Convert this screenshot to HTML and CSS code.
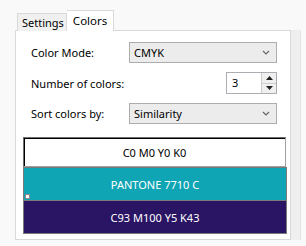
FILE: index.html
```html
<!DOCTYPE html>
<html>

<head>
    <title>Colors</title>
    <link rel="stylesheet" href="styles.css">
</head>

<body>
    <div class="window">
        <div class="tabs">
            <div class="tab">Settings</div>
            <div class="tab active">Colors</div>
        </div>
        <div class="body-row">
            <div class="panel">
                <div class="form">
                    <span class="label">Color Mode:</span>
                    <div class="select">
                        <span>CMYK</span>
                        <svg class="chevron" width="8" height="5" viewBox="0 0 8 5"><path d="M1 1 L4 4 L7 1" fill="none" stroke="#666" stroke-width="1.2"/></svg>
                    </div>

                    <span class="label">Number of colors:</span>
                    <div class="spin-cell">
                        <div class="spin">
                            <span class="value">3</span>
                            <div class="arrows">
                                <div class="arrow"><svg width="7" height="4" viewBox="0 0 7 4"><path d="M0 4 L3.5 0 L7 4 Z" fill="#222"/></svg></div>
                                <div class="arrow"><svg width="7" height="4" viewBox="0 0 7 4"><path d="M0 0 L3.5 4 L7 0 Z" fill="#222"/></svg></div>
                            </div>
                        </div>
                    </div>

                    <span class="label">Sort colors by:</span>
                    <div class="select">
                        <span>Similarity</span>
                        <svg class="chevron" width="8" height="5" viewBox="0 0 8 5"><path d="M1 1 L4 4 L7 1" fill="none" stroke="#666" stroke-width="1.2"/></svg>
                    </div>
                </div>

                <div class="swatches">
                    <div class="swatch white">C0 M0 Y0 K0</div>
                    <div class="swatch teal">PANTONE 7710 C<span class="marker"></span></div>
                    <div class="swatch purple">C93 M100 Y5 K43</div>
                </div>
            </div>
            <div class="strip"></div>
        </div>
    </div>
</body>

</html>
```

FILE: styles.css
```css
body {
    margin: 0;
    background-color: #f9f9f9;
    font-family: "Noto Sans", sans-serif;
    font-size: 11px;
    color: #000;
}

.window {
    padding: 10px 0 0 15px;
}

.tabs {
    display: flex;
    align-items: flex-end;
    padding-left: 2px;
    position: relative;
    z-index: 1;
    margin-bottom: -1px;
}

.tab {
    height: 17px;
    padding: 0 2px 0 4px;
    display: flex;
    align-items: center;
    background-color: #f0f0f0;
    border: 1px solid #d9d9d9;
    border-bottom: none;
}

.tab.active {
    height: 21px;
    padding: 0 6px 2px 6px;
    background-color: #fff;
    border-left: none;
    box-sizing: border-box;
    font-size: 11.5px;
}

.body-row {
    display: flex;
}

.panel {
    width: 274px;
    height: 208px;
    background-color: #fff;
    border: 1px solid #d9d9d9;
}

.strip {
    width: 9px;
    height: 210px;
    background-color: #efefef;
    border-right: 1px solid #e4e4e4;
}

.form {
    display: grid;
    grid-template-columns: 98px 1fr;
    grid-template-rows: 21px 22px 21px;
    row-gap: 9px;
    align-items: center;
    padding: 11px 13px 0 15px;
}

.label {
    line-height: 21px;
}

.select {
    height: 21px;
    box-sizing: border-box;
    display: flex;
    align-items: center;
    justify-content: space-between;
    padding: 0 6px 0 4px;
    background-color: #ececec;
    border: 1px solid #adadad;
}

.spin-cell {
    display: flex;
    justify-content: flex-end;
}

.spin {
    width: 51px;
    height: 22px;
    box-sizing: border-box;
    display: flex;
    border: 1px solid #abadb3;
    background-color: #fff;
}

.value {
    flex: 1;
    padding-left: 5px;
    line-height: 20px;
}

.arrows {
    width: 14px;
    display: flex;
    flex-direction: column;
    border-left: 1px solid #cdcdcd;
}

.arrow {
    flex: 1;
    display: flex;
    align-items: center;
    justify-content: center;
    background-color: #efefef;
}

.arrow + .arrow {
    border-top: 1px solid #cdcdcd;
}

.swatches {
    margin: 13px 3px 0 7px;
}

.swatch {
    display: flex;
    align-items: center;
    justify-content: center;
    box-sizing: border-box;
    border: 1px solid #7a7a7a;
    color: #fff;
    position: relative;
}

.swatch.white {
    height: 30px;
    width: 263px;
    background-color: #fff;
    color: #000;
    border-color: #6e6e6e #a0a0a0 #a0a0a0 #6e6e6e;
    box-shadow: inset 1px 1px 0 #000;
}

.swatch.teal {
    height: 34px;
    background-color: #10a5b5;
}

.swatch.purple {
    height: 33px;
    border-top: none;
    background-color: #2a1565;
}

.marker {
    position: absolute;
    left: 1px;
    bottom: 1px;
    width: 3px;
    height: 3px;
    background-color: #fff;
    border: 1px solid #8a8a8a;
}
```
